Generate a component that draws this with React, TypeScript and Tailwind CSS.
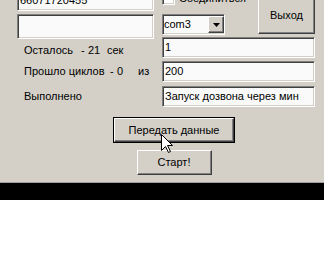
import React from "react";

const sunken =
  "border border-t-[#808080] border-l-[#808080] border-b-white border-r-white shadow-[inset_1px_1px_0_#404040,inset_-1px_-1px_0_#d4d0c8]";
const raised =
  "border border-t-white border-l-white border-b-[#404040] border-r-[#404040] shadow-[inset_-1px_-1px_0_#808080]";

function Field({ text, className }: { text?: string; className: string }) {
  return (
    <div className={`${sunken} ${className} bg-[#fafafa] flex items-center pl-[2px] whitespace-nowrap overflow-hidden`}>
      {text}
    </div>
  );
}

export default function App() {
  return (
    <div className="w-[324px] h-[260px] bg-white overflow-hidden font-['Liberation_Sans',Arial,sans-serif] text-[11px] leading-[13px] text-black">
      <div className="relative h-[182px] bg-[#d4d0c8] overflow-hidden">
        <div className="flex -mt-[11px]">
          {/* left column */}
          <div className="ml-[17px] w-[137px] shrink-0 flex flex-col">
            <Field className="h-[22px]" text="66071720455" />
            <Field className="mt-[3px] h-[25px]" />
            <div className="mt-[5px] ml-[7px] flex whitespace-nowrap">
              <span className="w-[57px]">Осталось</span>
              <span className="w-[7px]">-</span>
              <span className="w-[19px]">21</span>
              <span>сек</span>
            </div>
            <div className="mt-[8px] ml-[7px] flex whitespace-nowrap">
              <span className="w-[86px]">Прошло циклов</span>
              <span className="w-[7px]">-</span>
              <span className="w-[21px]">0</span>
              <span>из</span>
            </div>
            <div className="mt-[12px] ml-[7px]">Выполнено</div>
          </div>
          {/* right column */}
          <div className="ml-[8px] w-[153px] shrink-0 flex flex-col">
            <div className="flex">
              <div className="w-[96px] shrink-0 flex flex-col">
                <div className="mt-[3px] flex items-center">
                  <div className={`${sunken} w-[13px] h-[13px] bg-white shrink-0`} />
                  <span className="ml-[4px] whitespace-nowrap">Соединиться</span>
                </div>
                <div className={`${sunken} mt-[9px] w-[63px] h-[21px] bg-[#fafafa] flex items-center`}>
                  <span className="pl-[1px] flex-1">com3</span>
                  <div className={`${raised} w-[16px] h-[17px] bg-[#d4d0c8] flex items-center justify-center shrink-0`}>
                    <svg width="7" height="4" viewBox="0 0 7 4">
                      <polygon points="0,0 7,0 3.5,4" fill="#000" />
                    </svg>
                  </div>
                </div>
              </div>
              <div className={`${raised} mt-[8px] w-[57px] h-[37px] shrink-0 flex items-center justify-center`}>
                Выход
              </div>
            </div>
            <Field className="mt-[2px] h-[21px]" text="1" />
            <Field className="mt-[3px] h-[21px]" text="200" />
            <Field className="mt-[4px] h-[21px]" text="Запуск дозвона через мин" />
          </div>
        </div>
        <div className="flex flex-col items-center pl-[24px]">
          <div className="mt-[10px] w-[122px] h-[26px] border border-black">
            <div className={`${raised} w-full h-full flex items-center justify-center`}>
              Передать данные
            </div>
          </div>
          <div className={`${raised} mt-[7px] w-[75px] h-[25px] flex items-center justify-center`}>
            Старт!
          </div>
        </div>
        <svg
          className="absolute left-[161px] top-[134px]"
          width="12"
          height="19"
          viewBox="0 0 12 19"
        >
          <polygon
            points="0.5,0.5 0.5,16.5 4.5,12.5 7.5,18.5 9.5,17.5 6.5,11.5 11.5,11.5"
            fill="#fff"
            stroke="#000"
            strokeWidth="1"
          />
        </svg>
      </div>
      <div className="h-px bg-[#a0a0a0]" />
      <div className="h-[17px] bg-black" />
    </div>
  );
}
